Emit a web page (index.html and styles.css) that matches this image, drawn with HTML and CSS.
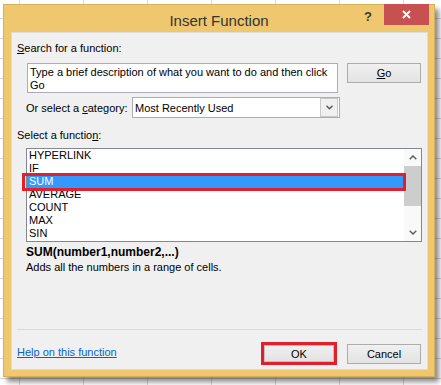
FILE: index.html
```html
<!DOCTYPE html>
<html lang="en">
<head>
    <meta charset="UTF-8">
    <title>Insert Function</title>
    <link rel="stylesheet" href="styles.css">
</head>
<body>
<div class="dialog">
    <div class="title_bar">
        <span></span>
        <span class="title">Insert Function</span>
        <div class="ctrl">
            <span class="help">?</span>
            <span class="close">
                <svg width="9" height="9" viewBox="0 0 9 9"><path d="M1 1L8 8M8 1L1 8" stroke="#fff" stroke-width="2" fill="none"/></svg>
            </span>
        </div>
    </div>
    <div class="panel">
        <div class="lbl"><u>S</u>earch for a function:</div>
        <div class="search_row">
            <div class="search_box">Type a brief description of what you want to do and then click<br>Go</div>
            <span class="btn btn_go"><u>G</u>o</span>
        </div>
        <div class="cat_row">
            <span class="cat_lbl">Or select a <u>c</u>ategory:</span>
            <div class="select">
                <span class="sel_text">Most Recently Used</span>
                <span class="drop">
                    <svg width="7" height="5" viewBox="0 0 7 5"><polyline points="0.5,0.8 3.5,3.8 6.5,0.8" stroke="#555" stroke-width="1.4" fill="none"/></svg>
                </span>
            </div>
        </div>
        <div class="lbl lbl_fn">Select a functio<u>n</u>:</div>
        <div class="fn_list">
            <ul class="items">
                <li>HYPERLINK</li>
                <li>IF</li>
                <li class="on">SUM</li>
                <li>AVERAGE</li>
                <li>COUNT</li>
                <li>MAX</li>
                <li>SIN</li>
            </ul>
            <div class="scroll">
                <span class="arr">
                    <svg width="8" height="5" viewBox="0 0 8 5"><polyline points="0.7,4.3 4,1 7.3,4.3" stroke="#606060" stroke-width="1.5" fill="none"/></svg>
                </span>
                <span class="thumb"></span>
                <span class="arr arr_down">
                    <svg width="8" height="5" viewBox="0 0 8 5"><polyline points="0.7,0.7 4,4 7.3,0.7" stroke="#606060" stroke-width="1.5" fill="none"/></svg>
                </span>
            </div>
        </div>
        <div class="syntax">SUM(number1,number2,...)</div>
        <div class="desc">Adds all the numbers in a range of cells.</div>
        <div class="footer">
            <a href="" class="link">Help on this function</a>
            <span class="mark"><span class="btn btn_ok">OK</span></span>
            <span class="btn btn_cancel">Cancel</span>
        </div>
    </div>
</div>
</body>
</html>
```

FILE: styles.css
```css
body, div, ul, li, a, span {
    margin: 0;
    padding: 0;
}

ul, li {
    list-style-type: none;
}

html, body {
    width: 441px;
    height: 385px;
    overflow: hidden;
}

body {
    font-family: "Liberation Sans", Arial, sans-serif;
    font-size: 11px;
    color: #000;
    background-color: #fff;
    background-image: linear-gradient(to right, #d6d6d6 1px, transparent 1px),
                      linear-gradient(to bottom, #d6d6d6 1px, transparent 1px);
    background-size: 64px 20px;
    background-position: 19px 18px;
}

u {
    text-decoration: underline;
}

/* dialog frame */
.dialog {
    display: flex;
    flex-direction: column;
    box-sizing: border-box;
    margin: 4px 0 0 3px;
    width: 432px;
    height: 373px;
    padding: 0 6px 6px 7px;
    background-color: #efc76e;
    border: 1px solid #d8b05c;
    box-shadow: 4px 5px 5px rgba(0, 0, 0, .45);
}

.title_bar {
    display: grid;
    grid-template-columns: 1fr auto 1fr;
    margin: 0 -6px 0 -7px;
    height: 27px;
}

.title {
    padding-top: 6px;
    line-height: 20px;
    font-size: 15px;
    color: #333;
}

.ctrl {
    display: flex;
    justify-content: flex-end;
    align-items: flex-start;
}

.help {
    margin: 5px 12px 0 0;
    line-height: 14px;
    font-size: 13px;
    font-weight: bold;
    color: #3a3a3a;
}

.close {
    display: flex;
    align-items: center;
    justify-content: center;
    margin: -1px 5px 0 0;
    width: 45px;
    height: 21px;
    background-color: #c75050;
}

/* client area */
.panel {
    flex: 1;
    display: flex;
    flex-direction: column;
    padding: 8px 5px 0 5px;
    background-color: #f0f0f0;
    border: 1px solid #dcdcdc;
}

.lbl {
    line-height: 14px;
}

.search_row {
    display: flex;
    align-items: flex-start;
    margin: 8px 1px 0 10px;
}

.search_box {
    box-sizing: border-box;
    width: 311px;
    height: 30px;
    padding: 2px 2px;
    line-height: 13px;
    background-color: #fff;
    border: 1px solid #abadb3;
}

.btn {
    box-sizing: border-box;
    display: flex;
    align-items: center;
    justify-content: center;
    background: linear-gradient(#f0f0f0, #e3e3e3);
    border: 1px solid #acacac;
    color: #000;
}

.btn_go {
    margin-left: 9px;
    width: 74px;
    height: 20px;
}

.cat_row {
    display: flex;
    align-items: center;
    margin: 4px 0 0 9px;
}

.cat_lbl {
    width: 106px;
}

.select {
    box-sizing: border-box;
    display: flex;
    align-items: center;
    width: 208px;
    height: 21px;
    background-color: #fff;
    border: 1px solid #abadb3;
}

.sel_text {
    padding-left: 2px;
}

.drop {
    box-sizing: border-box;
    display: flex;
    align-items: center;
    justify-content: center;
    margin: 0 1px 0 auto;
    width: 18px;
    height: 19px;
    background-color: #f0f0f0;
    border: 1px solid #c9c9c9;
}

.lbl_fn {
    margin-top: 10px;
}

.fn_list {
    box-sizing: border-box;
    display: flex;
    margin: 6px 0 0 9px;
    width: 396px;
    height: 94px;
    background-color: #fff;
    border: 1px solid #828790;
}

.items {
    flex: 1;
}

.items li {
    padding-left: 2px;
    height: 13px;
    line-height: 13px;
}

.items li.on {
    position: relative;
    background-color: #3399ff;
    color: #fff;
}

/* red marker drawn over the screenshot */
.items li.on::after {
    content: "";
    position: absolute;
    box-sizing: border-box;
    left: -5px;
    right: -2px;
    top: -2px;
    bottom: -3px;
    border: 3px solid #e0202c;
}

.scroll {
    display: flex;
    flex-direction: column;
    width: 17px;
    background-color: #f9f9f9;
}

.arr {
    display: flex;
    align-items: center;
    justify-content: center;
    height: 17px;
}

.arr_down {
    margin-top: auto;
}

.thumb {
    height: 40px;
    background-color: #cdcdcd;
}

.syntax {
    margin: 3px 0 0 9px;
    line-height: 14px;
    font-size: 12px;
    font-weight: bold;
}

.desc {
    margin: 1px 0 0 9px;
    line-height: 14px;
}

.footer {
    display: flex;
    align-items: center;
    margin-top: auto;
    padding: 12px 1px 4px 0;
    border-top: 1px solid #dadada;
}

.link {
    margin-top: -3px;
    color: #0066cc;
    text-decoration: underline;
}

.mark {
    margin-left: auto;
    border: 3px solid #e0202c;
}

.btn_ok {
    width: 70px;
    height: 17px;
    border-color: #c0c0c0;
}

.btn_cancel {
    margin-left: 10px;
    width: 74px;
    height: 20px;
}
```
